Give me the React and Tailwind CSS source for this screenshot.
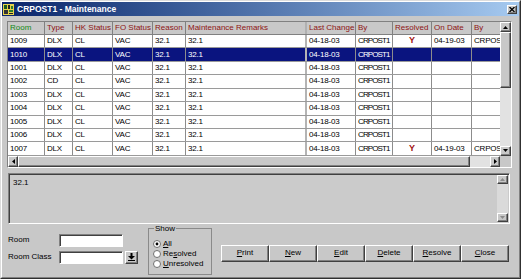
import React from 'react';

const raised = 'border border-t-white border-l-white border-r-[#404040] border-b-[#404040] shadow-[inset_-1px_-1px_0_#808080]';
const sunken = 'border border-t-[#808080] border-l-[#808080] border-r-white border-b-white shadow-[inset_1px_1px_0_#404040]';

const columns = [
    { w: 'w-[37px]', label: 'Room', head: 'text-[#138a13]' },
    { w: 'w-[28px]', label: 'Type' },
    { w: 'w-[40px]', label: 'HK Status' },
    { w: 'w-[40px]', label: 'FO Status' },
    { w: 'w-[33px]', label: 'Reason' },
    { w: 'w-[121px]', label: 'Maintenance Remarks', thick: true },
    { w: 'w-[49px]', label: 'Last Change' },
    { w: 'w-[37px]', label: 'By', tight: true },
    { w: 'w-[39px]', label: 'Resolved', center: true },
    { w: 'w-[40px]', label: 'On Date' },
    { w: 'w-[28px]', label: 'By', last: true },
];

const rows = [
    ['1009', 'DLX', 'CL', 'VAC', '32.1', '32.1', '04-18-03', 'CRPOST1', 'Y', '04-19-03', 'CRPOST1'],
    ['1010', 'DLX', 'CL', 'VAC', '32.1', '32.1', '04-18-03', 'CRPOST1', '', '', ''],
    ['1001', 'DLX', 'CL', 'VAC', '32.1', '32.1', '04-18-03', 'CRPOST1', '', '', ''],
    ['1002', 'CD', 'CL', 'VAC', '32.1', '32.1', '04-18-03', 'CRPOST1', '', '', ''],
    ['1003', 'DLX', 'CL', 'VAC', '32.1', '32.1', '04-18-03', 'CRPOST1', '', '', ''],
    ['1004', 'DLX', 'CL', 'VAC', '32.1', '32.1', '04-18-03', 'CRPOST1', '', '', ''],
    ['1005', 'DLX', 'CL', 'VAC', '32.1', '32.1', '04-18-03', 'CRPOST1', '', '', ''],
    ['1006', 'DLX', 'CL', 'VAC', '32.1', '32.1', '04-18-03', 'CRPOST1', '', '', ''],
    ['1007', 'DLX', 'CL', 'VAC', '32.1', '32.1', '04-18-03', 'CRPOST1', 'Y', '04-19-03', 'CRPOST1'],
];

const Arrow = ({ dir, disabled }) => {
    const fill = disabled ? '#8a8a8a' : '#000';
    if (dir === 'up') return <svg width="5" height="3" viewBox="0 0 5 3"><polygon points="0,3 5,3 2.5,0" fill={fill} /></svg>;
    if (dir === 'down') return <svg width="5" height="3" viewBox="0 0 5 3"><polygon points="0,0 5,0 2.5,3" fill={fill} /></svg>;
    if (dir === 'left') return <svg width="3" height="5" viewBox="0 0 3 5"><polygon points="3,0 3,5 0,2.5" fill={fill} /></svg>;
    return <svg width="3" height="5" viewBox="0 0 3 5"><polygon points="0,0 0,5 3,2.5" fill={fill} /></svg>;
};

const ScrollBtn = ({ dir, disabled, className }) => (
    <div className={`${raised} ${className} bg-[#c8c8c8] flex items-center justify-center shrink-0`}>
        <Arrow dir={dir} disabled={disabled} />
    </div>
);

const Radio = ({ checked }) => (
    <svg width="8" height="8" viewBox="0 0 8 8" className="shrink-0">
        <circle cx="4" cy="4" r="3.5" fill="#fff" stroke="#707070" />
        {checked && <circle cx="4" cy="4" r="1.4" fill="#000" />}
    </svg>
);

const App = () => {
    return (
        <div className="w-[521px] h-[279px] bg-[#c8c8c8] border border-t-[#dcdcdc] border-l-[#dcdcdc] border-r-[#303030] border-b-[#303030] [font-family:'Liberation_Sans',Arial,sans-serif] text-[8px] text-black">
            <div className="h-full border border-t-white border-l-white border-r-[#808080] border-b-[#808080] flex flex-col">
                {/* title bar */}
                <div className="h-[14px] shrink-0 bg-linear-to-r from-[#0a246a] to-[#a6caf0] flex items-center">
                    <svg width="11" height="11" viewBox="0 0 11 11" className="ml-[1px]">
                        <rect width="11" height="11" fill="#e6d24a" />
                        <rect x="1" y="1" width="3" height="4" fill="#1d5a1d" />
                        <rect x="5" y="1" width="2" height="4" fill="#222" />
                        <rect x="8" y="2" width="2" height="3" fill="#2e7d2e" />
                        <rect x="1" y="6" width="4" height="4" fill="#333" />
                        <rect x="6" y="6" width="4" height="2" fill="#2e7d2e" />
                        <rect x="6" y="9" width="4" height="1" fill="#222" />
                    </svg>
                    <span className="ml-[3px] text-white font-bold text-[8.5px]">CRPOST1 - Maintenance</span>
                    <div className={`${raised} ml-auto mr-[2px] w-[10px] h-[9px] bg-[#c8c8c8] flex items-center justify-center`}>
                        <svg width="6" height="5" viewBox="0 0 6 5">
                            <path d="M0.5 0 L5.5 5 M5.5 0 L0.5 5" stroke="#000" strokeWidth="1.3" />
                        </svg>
                    </div>
                </div>

                {/* grid */}
                <div className="mt-[5px] ml-[5px] w-[505px] border border-t-[#808080] border-l-[#808080] border-r-white border-b-white flex flex-col">
                    <div className="flex">
                        <div className="w-[492px] bg-white">
                            <div className="flex h-[13px] bg-[#c8c8c8] border-b border-[#808080]">
                                {columns.map((c, i) => (
                                    <div
                                        key={i}
                                        className={`${c.w} shrink-0 h-full pl-[2px] flex items-center whitespace-nowrap overflow-hidden ${c.head || 'text-[#8e1414]'} ${c.last ? '' : c.thick ? 'border-r-2 border-[#b0b0b0]' : 'border-r border-[#808080]'}`}
                                    >
                                        {c.label}
                                    </div>
                                ))}
                            </div>
                            {rows.map((r, ri) => {
                                const sel = ri === 1;
                                return (
                                    <div key={ri} className={`flex h-[13.43px] border-b border-[#9a9a9a] ${sel ? 'bg-[#0a147f] text-white' : 'bg-white'}`}>
                                        {r.map((v, ci) => {
                                            const c = columns[ci];
                                            return (
                                                <div
                                                    key={ci}
                                                    className={`${c.w} shrink-0 h-full flex items-center whitespace-nowrap overflow-hidden ${c.center ? 'justify-center font-bold text-[#a01010] text-[9px]' : 'pl-[2px]'} ${c.tight ? 'pl-[1px] tracking-[-0.9px]' : 'tracking-[-0.2px]'} ${c.last ? '' : c.thick ? 'border-r-2 border-[#b4b4b4]' : 'border-r border-[#8c8c8c]'}`}
                                                >
                                                    {v}
                                                </div>
                                            );
                                        })}
                                    </div>
                                );
                            })}
                        </div>
                        <div className="w-[11px] flex flex-col bg-[#e2e2e2]">
                            <ScrollBtn dir="up" className="w-[11px] h-[10px]" />
                            <div className={`${raised} h-[56px] bg-[#c8c8c8]`} />
                            <div className="flex-1" />
                            <ScrollBtn dir="down" className="w-[11px] h-[10px]" />
                        </div>
                    </div>
                    <div className="flex h-[11px]">
                        <div className="w-[492px] flex bg-[#e2e2e2]">
                            <ScrollBtn dir="left" className="w-[10px] h-full" />
                            <div className={`${raised} w-[452px] h-full bg-[#c8c8c8]`} />
                            <div className="flex-1" />
                            <ScrollBtn dir="right" className="w-[10px] h-full" />
                        </div>
                        <div className="w-[11px] bg-[#c8c8c8]" />
                    </div>
                </div>

                {/* remarks */}
                <div className={`${sunken} mt-[5px] ml-[6px] w-[502px] h-[51px] bg-[#cbcbcb] flex`}>
                    <div className="flex-1 pl-[4px] pt-[5px] leading-none">32.1</div>
                    <div className="w-[11px] flex flex-col mt-[1px] mb-[1px] mr-[1px]">
                        <ScrollBtn dir="up" disabled className="w-[11px] h-[9px]" />
                        <div className="flex-1 bg-[#dadada]" />
                        <ScrollBtn dir="down" disabled className="w-[11px] h-[9px]" />
                    </div>
                </div>

                {/* controls */}
                <div className="flex items-start ml-[6px]">
                    <div className="mt-[10px] flex flex-col gap-[4px]">
                        <div className="flex items-center">
                            <span className="w-[51px]">Room</span>
                            <div className={`${sunken} w-[64px] h-[13px] bg-white`} />
                        </div>
                        <div className="flex items-center">
                            <span className="w-[51px]">Room Class</span>
                            <div className={`${sunken} w-[64px] h-[13px] bg-white`} />
                            <div className={`${raised} ml-[2px] w-[13px] h-[13px] bg-[#c8c8c8] flex items-center justify-center`}>
                                <svg width="7" height="8" viewBox="0 0 7 8">
                                    <rect x="2.5" y="0" width="2" height="3" fill="#000" />
                                    <polygon points="0,3 7,3 3.5,6.5" fill="#000" />
                                    <rect x="0" y="7" width="7" height="1" fill="#000" />
                                </svg>
                            </div>
                        </div>
                    </div>

                    <fieldset className="ml-[10px] mt-[1px] w-[64px] border border-[#8a8a8a] pl-[4px] pb-[5px]">
                        <legend className="ml-[1px] px-[1px] leading-[8px]">Show</legend>
                        <div className="pt-[6px] flex flex-col">
                            <div className="h-[10px] flex items-center gap-[2px]">
                                <Radio checked />
                                <span><span className="underline">A</span>ll</span>
                            </div>
                            <div className="h-[10px] flex items-center gap-[2px]">
                                <Radio />
                                <span>Re<span className="underline">s</span>olved</span>
                            </div>
                            <div className="h-[10px] flex items-center gap-[2px]">
                                <Radio />
                                <span><span className="underline">U</span>nresolved</span>
                            </div>
                        </div>
                    </fieldset>

                    <div className="ml-[9px] mt-[21px] flex">
                        {[['P', 'rint'], ['N', 'ew'], ['E', 'dit'], ['D', 'elete'], ['R', 'esolve'], ['C', 'lose']].map(([a, b]) => (
                            <div key={a} className={`${raised} w-[48px] h-[17px] bg-[#c8c8c8] flex items-center justify-center`}>
                                <span><span className="underline">{a}</span>{b}</span>
                            </div>
                        ))}
                    </div>
                </div>
            </div>
        </div>
    );
};

export default App;
